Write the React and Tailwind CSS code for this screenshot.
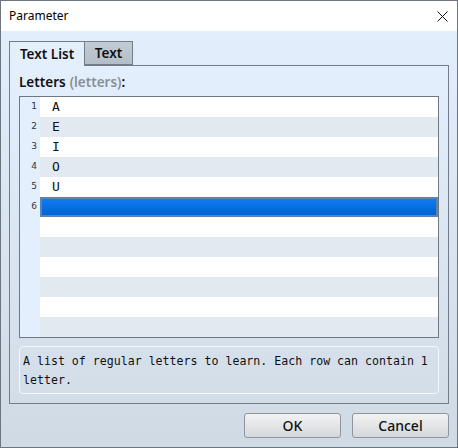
export default function App() {
  const letters = ["A", "E", "I", "O", "U", ""];
  const rows = Array.from({ length: 12 }, (_, i) => i);
  return (
    <div className="w-[458px] h-[448px] border border-[#6d757e] flex flex-col font-['Noto_Sans',sans-serif] text-[#111]">
      <div className="h-[30px] bg-white flex items-center justify-between pl-[8px] pr-[9px] shrink-0">
        <span className="text-[12px] text-black">Parameter</span>
        <svg width="11" height="11" viewBox="0 0 11 11" className="mr-[0px]">
          <path d="M0.5 0.5 L10.5 10.5 M10.5 0.5 L0.5 10.5" stroke="#111" strokeWidth="1" />
        </svg>
      </div>
      <div className="flex-1 flex flex-col bg-gradient-to-b from-[#e2eefc] to-[#d0dae5] pt-[9px] px-[8px]">
        <div className="flex h-[25px] items-end">
          <div className="w-[76px] h-[25px] border border-b-0 border-[#747d87] bg-[#e4effc] flex items-center justify-center text-[13.5px] font-semibold relative top-[1px] z-10">
            Text List
          </div>
          <div className="w-[48px] h-[24px] border border-l-0 border-[#747d87] bg-gradient-to-b from-[#c2ccd6] to-[#b4bec8] flex items-center justify-center text-[13.5px] font-semibold">
            Text
          </div>
        </div>
        <div className="h-[339px] border border-[#747d87] bg-gradient-to-b from-[#e3effd] to-[#d3dde8] flex flex-col px-[9px]">
          <div className="h-[30px] flex items-end pb-[4px] text-[13.5px] font-semibold">
            <span>Letters</span>
            <span className="text-[#8a8f96] ml-[4px]">(letters)</span>
            <span>:</span>
          </div>
          <div className="h-[242px] border border-[#6f7780] flex bg-white">
            <div className="w-[20px] bg-[#e3effd] flex flex-col">
              {rows.map((i) => (
                <div key={i} className="h-[20px] flex items-center justify-end pr-[3px] text-[9px] text-[#333] font-['DejaVu_Sans',sans-serif]">
                  {i < 6 ? i + 1 : ""}
                </div>
              ))}
            </div>
            <div className="flex-1 flex flex-col">
              {rows.map((i) =>
                i === 5 ? (
                  <div key={i} className="h-[20px] border-2 border-[#5d84ac] bg-gradient-to-b from-[#127bf0] to-[#0062d6]" />
                ) : (
                  <div
                    key={i}
                    className={`h-[20px] flex items-center pl-[12px] text-[13px] font-['DejaVu_Sans_Mono',monospace] ${i % 2 === 0 ? "bg-white" : "bg-[#e2e9f0]"}`}
                  >
                    {letters[i] || ""}
                  </div>
                )
              )}
            </div>
          </div>
          <div className="mt-[8px] h-[48px] border border-[#f4f8fc] rounded-[4px] px-[3px] pt-[5px] text-[11.6px] leading-[19px] font-['DejaVu_Sans_Mono',monospace] text-[#111]">
            A list of regular letters to learn. Each row can contain 1
            <br />
            letter.
          </div>
        </div>
        <div className="flex justify-end gap-[11px] mt-[9px]">
          <button className="w-[97px] h-[25px] border border-[#8e959c] rounded-[3px] bg-gradient-to-b from-[#f2f2f2] to-[#d5d8db] text-[14px] font-medium text-[#111] flex items-center justify-center">
            OK
          </button>
          <button className="w-[97px] h-[25px] border border-[#8e959c] rounded-[3px] bg-gradient-to-b from-[#f2f2f2] to-[#d5d8db] text-[14px] font-medium text-[#111] flex items-center justify-center">
            Cancel
          </button>
        </div>
      </div>
    </div>
  );
}
